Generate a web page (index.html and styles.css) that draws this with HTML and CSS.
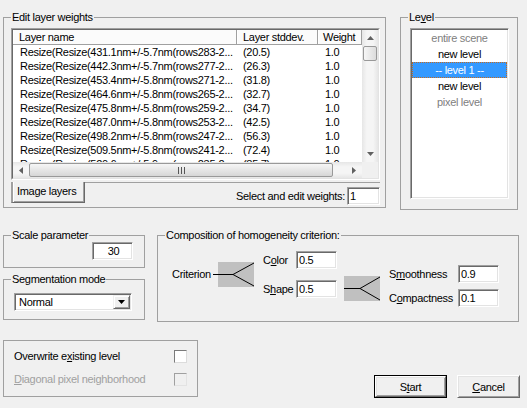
FILE: index.html
```html
<!DOCTYPE html>
<html>
<head>
<meta charset="utf-8">
<link rel="stylesheet" href="styles.css">
</head>
<body>
<div class="dialog">
  <div class="row-top">
    <fieldset class="grp grp-weights">
      <legend>Edit layer weights</legend>
      <div class="grp-body weights-body">
        <div class="listview">
          <div class="lv-grid">
            <div class="lv-main">
              <div class="lv-header">
                <div class="hc c1">Layer name</div>
                <div class="hc c2">Layer stddev.</div>
                <div class="hc c3">Weight</div>
              </div>
              <div class="lv-row"><span class="c1">Resize(Resize(431.1nm+/-5.7nm(rows283-2...</span><span class="c2">(20.5)</span><span class="c3">1.0</span></div>
              <div class="lv-row"><span class="c1">Resize(Resize(442.3nm+/-5.7nm(rows277-2...</span><span class="c2">(26.3)</span><span class="c3">1.0</span></div>
              <div class="lv-row"><span class="c1">Resize(Resize(453.4nm+/-5.8nm(rows271-2...</span><span class="c2">(31.8)</span><span class="c3">1.0</span></div>
              <div class="lv-row"><span class="c1">Resize(Resize(464.6nm+/-5.8nm(rows265-2...</span><span class="c2">(32.7)</span><span class="c3">1.0</span></div>
              <div class="lv-row"><span class="c1">Resize(Resize(475.8nm+/-5.8nm(rows259-2...</span><span class="c2">(34.7)</span><span class="c3">1.0</span></div>
              <div class="lv-row"><span class="c1">Resize(Resize(487.0nm+/-5.8nm(rows253-2...</span><span class="c2">(42.5)</span><span class="c3">1.0</span></div>
              <div class="lv-row"><span class="c1">Resize(Resize(498.2nm+/-5.8nm(rows247-2...</span><span class="c2">(56.3)</span><span class="c3">1.0</span></div>
              <div class="lv-row"><span class="c1">Resize(Resize(509.5nm+/-5.8nm(rows241-2...</span><span class="c2">(72.4)</span><span class="c3">1.0</span></div>
              <div class="lv-row"><span class="c1">Resize(Resize(520.6nm+/-5.9nm(rows235-2...</span><span class="c2">(85.7)</span><span class="c3">1.0</span></div>
            </div>
            <div class="vscroll">
              <div class="sb-btn vbtn"><svg width="7" height="4" viewBox="0 0 7 4"><path d="M3.5 0L7 4H0z"/></svg></div>
              <div class="vthumb"></div>
              <div class="sb-track"></div>
              <div class="sb-btn vbtn"><svg width="7" height="4" viewBox="0 0 7 4"><path d="M0 0H7L3.5 4z"/></svg></div>
            </div>
            <div class="hscroll">
              <div class="sb-btn hbtn"><svg width="4" height="7" viewBox="0 0 4 7"><path d="M0 3.5L4 0V7z"/></svg></div>
              <div class="hthumb"><svg width="7" height="7" viewBox="0 0 7 7"><path d="M0.5 0V7M3.5 0V7M6.5 0V7" stroke="#555" stroke-width="1"/></svg></div>
              <div class="sb-track"></div>
              <div class="sb-btn hbtn hbtn-r"><svg width="4" height="7" viewBox="0 0 4 7"><path d="M0 0L4 3.5L0 7z"/></svg></div>
            </div>
            <div class="corner"></div>
          </div>
        </div>
        <div class="tabstrip">
          <div class="tab">Image layers</div>
          <div class="tabrest">
            <span class="lbl">Select and edit weights:</span>
            <div class="edit edit-w">1</div>
          </div>
        </div>
      </div>
    </fieldset>
    <fieldset class="grp grp-level">
      <legend>Le<u>v</u>el</legend>
      <div class="grp-body level-body">
        <div class="listbox">
          <div class="li dis">entire scene</div>
          <div class="li">new level</div>
          <div class="li sel">-- level 1 --</div>
          <div class="li">new level</div>
          <div class="li dis">pixel level</div>
        </div>
      </div>
    </fieldset>
  </div>

  <div class="row-mid">
    <div class="left-col">
      <fieldset class="grp grp-scale">
        <legend>Scale parameter</legend>
        <div class="grp-body scale-body">
          <div class="edit edit-scale">30</div>
        </div>
      </fieldset>
      <fieldset class="grp grp-seg">
        <legend>Segmentation mode</legend>
        <div class="grp-body seg-body">
          <div class="combo">
            <span class="combo-text">Normal</span>
            <div class="combo-btn"><svg width="7" height="4" viewBox="0 0 7 4"><path d="M0 0H7L3.5 4z"/></svg></div>
          </div>
        </div>
      </fieldset>
    </div>
    <fieldset class="grp grp-comp">
      <legend>Composition of homogeneity criterion:</legend>
      <div class="grp-body comp-body">
        <span class="crit-label">Criterion</span>
        <svg class="fork1" width="41" height="25" viewBox="0 0 41 25">
          <rect x="5" y="0" width="36" height="25" fill="#c0c0c0"/>
          <path d="M0 12.5H20L41 1M20 12.5L41 24" stroke="#000" stroke-width="1" fill="none"/>
        </svg>
        <div class="pair-col col1">
          <div class="pair"><span class="plabel l1">C<u>o</u>lor</span><div class="edit edit-v">0.5</div></div>
          <div class="pair"><span class="plabel l1">S<u>h</u>ape</span><div class="edit edit-v">0.5</div></div>
        </div>
        <svg class="fork2" width="36" height="25" viewBox="0 0 36 25">
          <rect x="0" y="0" width="36" height="25" fill="#c0c0c0"/>
          <path d="M0 12.5H16L36 1M16 12.5L36 24" stroke="#000" stroke-width="1" fill="none"/>
        </svg>
        <div class="pair-col col2">
          <div class="pair"><span class="plabel l2">S<u>m</u>oothness</span><div class="edit edit-v">0.9</div></div>
          <div class="pair"><span class="plabel l2">C<u>o</u>mpactness</span><div class="edit edit-v">0.1</div></div>
        </div>
      </div>
    </fieldset>
  </div>

  <div class="row-bottom">
    <fieldset class="grp grp-opts">
      <div class="grp-body opts-body">
        <div class="opt"><span>Overwrite e<u>x</u>isting level</span><span class="chk"></span></div>
        <div class="opt disabled"><span><u>D</u>iagonal pixel neighborhood</span><span class="chk chk-dis"></span></div>
      </div>
    </fieldset>
    <div class="buttons">
      <div class="btn btn-default"><div class="btn-in">S<u>t</u>art</div></div>
      <div class="btn btn-cancel"><div class="btn-in"><u>C</u>ancel</div></div>
    </div>
  </div>
</div>
</body>
</html>
```

FILE: styles.css
```css
* { box-sizing: border-box; }
html, body { margin: 0; padding: 0; }
body {
  width: 527px;
  height: 408px;
  overflow: hidden;
  background: #f0f0f0;
  font-family: "Liberation Sans", Arial, sans-serif;
  font-size: 11px;
  letter-spacing: -0.3px;
  color: #000;
}
u { text-decoration: underline; text-underline-offset: 1px; }

.dialog {
  display: flex;
  flex-direction: column;
  padding: 11px 0 0 3px;
}

/* group boxes */
.grp {
  margin: 0;
  padding: 0;
  border: 1px solid #a0a0a0;
  min-width: 0;
}
.grp > legend {
  padding: 0 1px;
  margin-left: 7px;
  height: 13px;
  line-height: 13px;
}

/* top row */
.row-top { display: flex; align-items: flex-start; gap: 14px; }
.grp-weights { width: 383px; height: 197px; }
.weights-body { padding: 4px 0 0 7px; }
.grp-level { width: 118px; height: 199px; }
.level-body { padding: 4px 0 0 9px; }

/* list view */
.listview {
  width: 369px;
  height: 152px;
  border: 1px solid;
  border-color: #a0a0a0 #fff #fff #a0a0a0;
}
.lv-grid {
  width: 367px;
  height: 150px;
  border: 1px solid;
  border-color: #696969 #e3e3e3 #e3e3e3 #696969;
  display: grid;
  grid-template-columns: 349px 16px;
  grid-template-rows: 132px 16px;
  background: #fff;
}
.lv-main { overflow: hidden; background: #fff; }
.lv-header {
  display: flex;
  height: 15px;
  background: #fbfbfb;
  border-bottom: 1px solid #a0a0a0;
}
.hc {
  height: 14px;
  line-height: 14px;
  border-left: 1px solid #fff;
  border-right: 1px solid #a0a0a0;
  white-space: nowrap;
  overflow: hidden;
}
.lv-header .c1 { width: 224px; padding-left: 5px; }
.lv-header .c2 { width: 81px; padding-left: 5px; }
.lv-header .c3 { width: 44px; padding-left: 4px; }
.lv-row { display: flex; height: 14px; line-height: 14px; white-space: nowrap; }
.lv-row span { overflow: hidden; }
.lv-row .c1 { width: 224px; padding-left: 7px; }
.lv-row .c2 { width: 81px; padding-left: 6px; }
.lv-row .c3 { width: 44px; padding-left: 7px; }

.sb-btn { display: flex; align-items: center; justify-content: center; flex: none; }
.sb-btn svg path { fill: #606060; }
.sb-track { flex: 1; }
.vscroll {
  display: flex;
  flex-direction: column;
  background: linear-gradient(to right, #e6e6e6, #f5f5f5 30%, #f5f5f5 70%, #e6e6e6);
}
.vbtn { height: 16px; }
.vthumb {
  height: 15px;
  margin: 0 1px;
  border: 1px solid #999;
  border-radius: 2px;
  background: linear-gradient(to right, #f6f6f6, #dcdcdc);
}
.hscroll {
  display: flex;
  background: linear-gradient(to bottom, #e6e6e6, #f5f5f5 30%, #f5f5f5 70%, #e6e6e6);
}
.hbtn { width: 16px; }
.hbtn-r { width: 17px; }
.hthumb {
  width: 304px;
  margin: 1px 0;
  border: 1px solid #999;
  border-radius: 2px;
  background: linear-gradient(to bottom, #f6f6f6, #d6d6d6);
  display: flex;
  align-items: center;
  justify-content: center;
}
.corner { background: #f0f0f0; }

/* tabs */
.tabstrip { display: flex; margin-top: 2px; height: 22px; }
.tab {
  width: 74px;
  height: 21px;
  padding-left: 4px;
  line-height: 18px;
  border-left: 2px solid #a0a0a0;
  border-right: 1px solid #696969;
  border-bottom: 1px solid #696969;
  box-shadow: inset 1px 0 #fff, inset -1px -1px #a0a0a0;
}
.tabrest {
  width: 295px;
  border-top: 1px solid #a0a0a0;
  display: flex;
  justify-content: flex-end;
  align-items: flex-start;
  padding-top: 4px;
  gap: 2px;
}
.tabrest .lbl { line-height: 18px; }

/* edit boxes */
.edit {
  height: 18px;
  line-height: 16px;
  padding: 0 2px;
  background: #fff;
  border: 1px solid;
  border-color: #a0a0a0 #fff #fff #a0a0a0;
  box-shadow: inset 1px 1px #696969, inset -1px -1px #e3e3e3;
  white-space: nowrap;
}
.edit-w { width: 33px; }
.edit-scale { width: 41px; height: 18px; text-align: center; padding-left: 4px; }
.edit-v { width: 41px; }

/* level listbox */
.listbox {
  width: 99px;
  height: 171px;
  padding: 1px;
  background: #fff;
  border: 1px solid;
  border-color: #a0a0a0 #fff #fff #a0a0a0;
  box-shadow: inset 1px 1px #696969, inset -1px -1px #e3e3e3;
}
.li { height: 16px; line-height: 16px; text-align: center; white-space: nowrap; }
.li.dis { color: #808080; }
.li.sel {
  background: #3399ff;
  color: #fff;
  outline: 1px dotted #c46a1f;
  outline-offset: -1px;
}

/* middle row */
.row-mid { display: flex; align-items: flex-start; gap: 12px; margin-top: 19px; }
.left-col { width: 142px; display: flex; flex-direction: column; gap: 5px; }
.grp-scale { height: 39px; }
.scale-body { display: flex; justify-content: flex-end; padding-right: 11px; }
.grp-seg { height: 47px; }
.seg-body { padding: 7px 0 0 10px; }
.combo {
  width: 118px;
  height: 18px;
  display: flex;
  align-items: center;
  padding: 1px;
  background: #fff;
  border: 1px solid;
  border-color: #a0a0a0 #fff #fff #a0a0a0;
  box-shadow: inset 1px 1px #696969, inset -1px -1px #e3e3e3;
}
.combo-text { flex: 1; padding-left: 3px; line-height: 14px; }
.combo-btn {
  width: 17px;
  height: 14px;
  display: flex;
  align-items: center;
  justify-content: center;
  background: #f0f0f0;
  border: 1px solid;
  border-color: #f0f0f0 #696969 #696969 #f0f0f0;
  box-shadow: inset 1px 1px #fff, inset -1px -1px #a0a0a0;
}
.combo-btn svg path { fill: #000; }

.grp-comp { width: 362px; height: 93px; }
.comp-body { display: flex; align-items: flex-start; padding-left: 14px; }
.crit-label { width: 41px; margin-top: 26px; line-height: 13px; }
.fork1 { flex: none; margin-top: 20px; }
.fork2 { flex: none; margin-top: 34px; margin-left: 7px; }
.pair-col { display: flex; flex-direction: column; }
.col1 { width: 74px; margin-left: 9px; margin-top: 9px; gap: 11px; }
.col2 { width: 110px; margin-left: 9px; margin-top: 23px; gap: 6px; }
.pair { display: flex; align-items: center; height: 18px; }
.plabel { white-space: nowrap; }
.l1 { width: 33px; }
.l2 { width: 69px; }

/* bottom row */
.row-bottom { display: flex; align-items: flex-start; margin-top: 18px; }
.grp-opts { width: 195px; height: 57px; }
.opts-body { display: flex; flex-direction: column; gap: 10px; padding: 9px 10px 0 10px; }
.opt { display: flex; justify-content: space-between; align-items: center; height: 13px; line-height: 13px; }
.opt.disabled { color: #a0a0a0; }
.chk {
  width: 13px;
  height: 13px;
  background: #fff;
  border: 1px solid;
  border-color: #7a7a7a #dcdcdc #dcdcdc #7a7a7a;
}
.chk-dis { background: #f0f0f0; border-color: #a0a0a0 #e3e3e3 #e3e3e3 #a0a0a0; }

.buttons { display: flex; gap: 10px; margin-left: auto; margin-right: 7px; margin-top: 35px; }
.btn { height: 23px; background: #f0f0f0; }
.btn-default { width: 73px; border: 1px solid #000; }
.btn-cancel { width: 63px; }
.btn-in {
  height: 100%;
  display: flex;
  align-items: center;
  justify-content: center;
  border: 1px solid;
  border-color: #fff #696969 #696969 #fff;
  box-shadow: inset 1px 1px #e3e3e3, inset -1px -1px #a0a0a0;
}
```
